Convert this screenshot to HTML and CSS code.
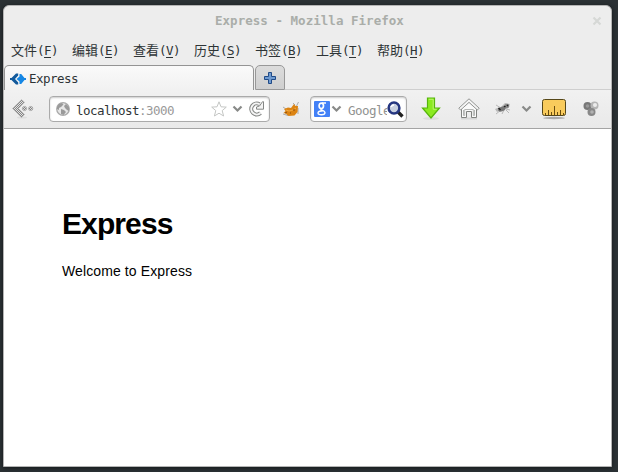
FILE: index.html
```html
<!DOCTYPE html>
<html lang="zh-CN">
<head>
<meta charset="utf-8">
<title>Express</title>
<link rel="stylesheet" href="styles.css">
</head>
<body>
<div class="window">
  <header class="titlebar">
    <span class="title">Express - Mozilla Firefox</span>
    <svg class="close" width="10" height="10" viewBox="0 0 10 10"><path d="M1.500 1.500l7 7M8.500 1.500l-7 7" stroke="#d6d8d6" stroke-width="2.200"/></svg>
  </header>
  <nav class="menu">
    <span>文件<i>(<u>F</u>)</i></span>
    <span>编辑<i>(<u>E</u>)</i></span>
    <span>查看<i>(<u>V</u>)</i></span>
    <span>历史<i>(<u>S</u>)</i></span>
    <span>书签<i>(<u>B</u>)</i></span>
    <span>工具<i>(<u>T</u>)</i></span>
    <span>帮助<i>(<u>H</u>)</i></span>
  </nav>
  <div class="tabs">
    <div class="tab">
      <svg width="16" height="12" viewBox="0 0 16 12">
        <path d="M0 5h1.500L6 .5h2.200v2L5 6l3.200 3.500v2H6L1.500 7H0z" fill="#135a9c"/>
        <path d="M6.500 6l3-2.500V1h1.700l3.300 4H16v2h-1.500l-3.300 4H9.500V8.500z" fill="#1687e5"/>
      </svg>
      <span>Express</span>
    </div>
    <div class="newtab">
      <svg width="12" height="12" viewBox="0 0 12 12"><path d="M4.500.5h3v4h4v3h-4v4h-3v-4h-4v-3h4z" fill="#6e9ad0" stroke="#204a87"/></svg>
    </div>
    <div class="tabfill"></div>
  </div>
  <div class="toolbar">
    <svg class="back" width="22" height="20" viewBox="0 0 22 20">
      <defs><pattern id="mesh" width="2" height="2" patternUnits="userSpaceOnUse"><rect width="2" height="2" fill="#e2e2e2"/><path d="M0 0h1v1H0zM1 1h1v1H1z" fill="#858585"/></pattern></defs>
      <ellipse cx="10" cy="18.500" rx="5" ry="1" fill="#ddd"/>
      <path d="M.5 9.500L9.500.7l3 2.500L6.500 9.500l6 6-3 3z" fill="url(#mesh)" stroke="#aaa" stroke-width=".7"/>
      <circle cx="12.500" cy="9.500" r="2.100" fill="url(#mesh)" stroke="#999" stroke-width=".7"/>
      <circle cx="18.700" cy="9.500" r="2.100" fill="url(#mesh)" stroke="#999" stroke-width=".7"/>
    </svg>
    <div class="field address">
      <svg class="globe" width="14" height="14" viewBox="0 0 14 14">
        <circle cx="7" cy="7" r="6.300" fill="#e6e6e6" stroke="#aaa" stroke-width="1.300"/>
        <path d="M1 5l2-3 3-1 1.500 1.500L5 5 3 6v2L1 7zM5 7l3 1 2 2-2.500 3L5 12zM8 4l2-2 3 3v4l-2-1-2-2z" fill="#9a9a9a"/>
      </svg>
      <span class="url">localhost<b>:3000</b></span>
      <svg class="star" width="16" height="16" viewBox="0 0 16 16"><path d="M8 .8l2 5 5.300.3-4.100 3.500 1.400 5.400L8 12.200 3.400 15l1.400-5.400L.7 6.100 6 5.800z" fill="#fff" stroke="#c4c6c4"/></svg>
      <svg class="chev" width="11" height="8" viewBox="0 0 11 8"><path d="M1.500 1.500l4 4 4-4" fill="none" stroke="#888a88" stroke-width="2.200"/></svg>
      <svg class="reload" width="17" height="16" viewBox="0 0 17 16">
        <path d="M11.500 3.200A5.500 5.500 0 1 0 12.500 12" fill="none" stroke="#858785" stroke-width="4"/>
        <path d="M11.500 3.200A5.500 5.500 0 1 0 12.500 12" fill="none" stroke="#f5f5f5" stroke-width="2"/>
        <path d="M14.500.7h1v7.500H8.500V6l3-1z" fill="#f5f5f5" stroke="#858785"/>
      </svg>
    </div>
    <svg class="fox" width="18" height="16" viewBox="0 0 18 16">
      <path d="M1 6l3 2M11 2l2 2M16.500 1l-2 4M1 13l5 1.500M16 7v6" fill="none" stroke="#aaa"/>
      <path d="M2 8l4-1.500 3 .5 3-4 1.500 2L16 5l-.5 6-3 3.500-6 .5-3-2.500-2-.5 2-2z" fill="#dc8413"/>
      <path d="M4 9l3 1 4-1 3-2" fill="none" stroke="#f3aa42"/>
      <path d="M3 12l2-1M8 12h1M12 8v2" stroke="#8b4d0b"/>
    </svg>
    <div class="field search">
      <svg class="engine" width="16" height="16" viewBox="0 0 16 16"><rect width="16" height="16" rx="1" fill="#4381f7"/><g fill="none" stroke="#fff"><ellipse cx="7.300" cy="4.800" rx="2.200" ry="2.700" stroke-width="1.700"/><path d="M8 2h4" stroke-width="1.400"/><path d="M7.500 7.800c-2.500 1 3.500 1.500 3.500 3.700 0 3-7 3-7 .5 0-2 3-2.300 5-2.300" stroke-width="1.400"/></g></svg>
      <svg class="chev" width="11" height="8" viewBox="0 0 11 8"><path d="M1.500 1.500l4 4 4-4" fill="none" stroke="#888a88" stroke-width="2.200"/></svg>
      <span class="hint">Google</span>
      <svg class="lens" width="17" height="17" viewBox="0 0 17 17"><path d="M11 11l4.500 4.500" stroke="#222" stroke-width="3.400"/><circle cx="7" cy="7" r="5.400" fill="#c8d0df" stroke="#253680" stroke-width="2.500"/><path d="M4 6q1-2 3-2" fill="none" stroke="#fff" stroke-width="1.600"/></svg>
    </div>
    <svg class="down" width="20" height="24" viewBox="0 0 20 24"><ellipse cx="10" cy="21.500" rx="8" ry="1.500" fill="#ddd"/><path d="M6.500 1h7v10h5L10 21 1.500 11h5z" fill="#8bea20" stroke="#57b50c" stroke-width="1.200"/><path d="M7.800 2.300h4.400v10h3.500" fill="none" stroke="#baf46f"/></svg>
    <svg class="home" width="22" height="22" viewBox="0 0 22 22">
      <path d="M3 20.500h16" stroke="#d5d5d5" stroke-width="2"/>
      <path d="M3.500 10v9.500h5v-6h5v6h5V10L11 4z" fill="#fafafa" stroke="#80827f"/>
      <path d="M5.500 12v5.500h1.200v-6h8.600v6h1.200V12" fill="none" stroke="#b5b7b5"/>
      <path d="M.8 10.200L11 .8l10.200 9.400-1.800 1.800L11 4.400 2.600 12z" fill="#f4f4f4" stroke="#898b89" stroke-width=".9"/>
    </svg>
    <svg class="bug" width="18" height="16" viewBox="0 0 18 16">
      <path d="M2 4l5 3M2 13l5-4M8 13l2-4M12 9l3 3M12 8l4 1" stroke="#aaa" stroke-width=".8"/>
      <path d="M7 6l4-4 5 1-3 5zM1 8l5-2 1 3-4 2z" fill="#b9b9b9"/>
      <ellipse cx="8" cy="8" rx="4" ry="2.300" transform="rotate(-25 8 8)" fill="#777"/>
      <circle cx="13" cy="5" r="2.300" fill="#888"/><path d="M4.500 7l2 2M10 5l1.500 1M13 4l1 1" stroke="#222" stroke-width="1.500"/>
    </svg>
    <svg class="chev" width="11" height="8" viewBox="0 0 11 8"><path d="M1.500 1.500l4 4 4-4" fill="none" stroke="#888a88" stroke-width="2.200"/></svg>
    <svg class="ruler" width="26" height="22" viewBox="0 0 26 22"><ellipse cx="13" cy="20" rx="11" ry="1.200" fill="#aaa"/><rect x="1.500" y="1.500" width="23" height="16" rx="2" fill="#f9cb5c" stroke="#554719"/><path d="M4.500 17v-2M7.500 17v-5M10.500 17v-3M13.500 17V8M16.500 17v-3M19.500 17v-5M22.500 17v-2" stroke="#6b4d0e"/></svg>
    <svg class="balls" width="17" height="16" viewBox="0 0 17 16">
      <circle cx="4.500" cy="5" r="4" fill="#777"/><circle cx="11.500" cy="4.500" r="4" fill="#b5b5b5"/><circle cx="8.500" cy="11" r="4" fill="#888"/>
      <circle cx="4.500" cy="5" r="1.800" fill="#999"/><circle cx="12" cy="4" r="2" fill="#ececec"/><circle cx="9" cy="11" r="1.800" fill="#b2b2b2"/>
    </svg>
  </div>
  <main class="page">
    <h1>Express</h1>
    <p>Welcome to Express</p>
  </main>
</div>
</body>
</html>
```
FILE: styles.css
```css
* { box-sizing: border-box; }
body {
  margin: 0;
  height: 472px;
  padding: 5px 6px 5px 3px;
  overflow: hidden;
  background: #2b3134;
  font: 12.5px/16px "DejaVu Sans Mono", "Noto Sans CJK SC", monospace;
  color: #2e3436;
}
svg { display: block; flex: none; }
.window {
  height: 462px;
  display: flex;
  flex-direction: column;
  background: #ededed;
  border: 1px solid #b4b4b4;
  border-radius: 6px 6px 0 0;
  box-shadow: 0 1px 4px #14181a;
  overflow: hidden;
}
.titlebar {
  height: 30px;
  display: flex;
  align-items: center;
  padding: 0 9px 0 211px;
  font-weight: bold;
  letter-spacing: .03px;
  color: #aaada9;
}
.title { flex: 1; white-space: nowrap; }
.menu {
  height: 29px;
  display: flex;
  gap: 14px;
  padding: 6px 0 0 7px;
  font-family: "Noto Sans CJK SC", sans-serif;
  font-size: 13px;
}
.menu span { width: 47px; white-space: nowrap; }
.menu i {
  font: 12.5px/16px "DejaVu Sans Mono", monospace;
  letter-spacing: -.53px;
}
.menu u { text-underline-offset: 2px; }
.tabs { height: 25px; display: flex; }
.tab {
  width: 250px;
  display: flex;
  align-items: center;
  gap: 3px;
  padding: 1px 0 0 5px;
  border: 1px solid #949494;
  border-bottom: 0;
  border-radius: 5px 5px 0 0;
  background: linear-gradient(#fafafa, #f1f1f1);
  letter-spacing: -.53px;
}
.newtab {
  width: 30px;
  margin-left: 1px;
  display: grid;
  place-items: center;
  border: 1px solid #989898;
  border-radius: 5px 5px 0 0;
  background: linear-gradient(#dcdcdc, #cfcfcf);
}
.tabfill { flex: 1; border-bottom: 1px solid #cfcfcf; }
.toolbar {
  height: 39px;
  display: flex;
  align-items: center;
  padding-left: 8px;
  border-bottom: 1px solid #a4a4a4;
  background: linear-gradient(#f1f1f1, #e9e9e9);
}
.field {
  height: 26px;
  display: flex;
  align-items: center;
  border: 1px solid #aaa;
  border-radius: 4px;
  background: #fff;
  box-shadow: inset 0 1px 2px #ccc;
  letter-spacing: -.53px;
}
.address { width: 221px; margin-left: 15px; padding: 0 4px 0 6px; }
.url { flex: 1; margin-left: 6px; padding-top: 3px; }
.url b { font-weight: normal; color: #999; }
.star { margin-right: 5px; }
.reload { margin-left: 5px; }
.fox { margin-left: 12px; }
.search { width: 97px; margin-left: 10px; padding-left: 3px; }
.search .chev { margin-left: 1px; }
.hint { width: 39px; margin-left: 6px; padding-top: 3px; overflow: hidden; color: #909290; }
.lens { margin-left: 0; }
.down { margin-left: 14px; }
.home { margin-left: 17px; }
.bug { margin-left: 14px; }
.bug + .chev { margin-left: 9px; }
.ruler { margin-left: 9px; }
.balls { margin-left: 16px; }
.page {
  flex: 1;
  padding: 77px 58px 0;
  background: #fff;
  color: #000;
  font: 14px/17px "Liberation Sans", sans-serif;
}
h1 { margin: 0; font-size: 30px; line-height: 36px; letter-spacing: -.9px; }
p { margin: 21px 0 0; letter-spacing: .11px; }
```
